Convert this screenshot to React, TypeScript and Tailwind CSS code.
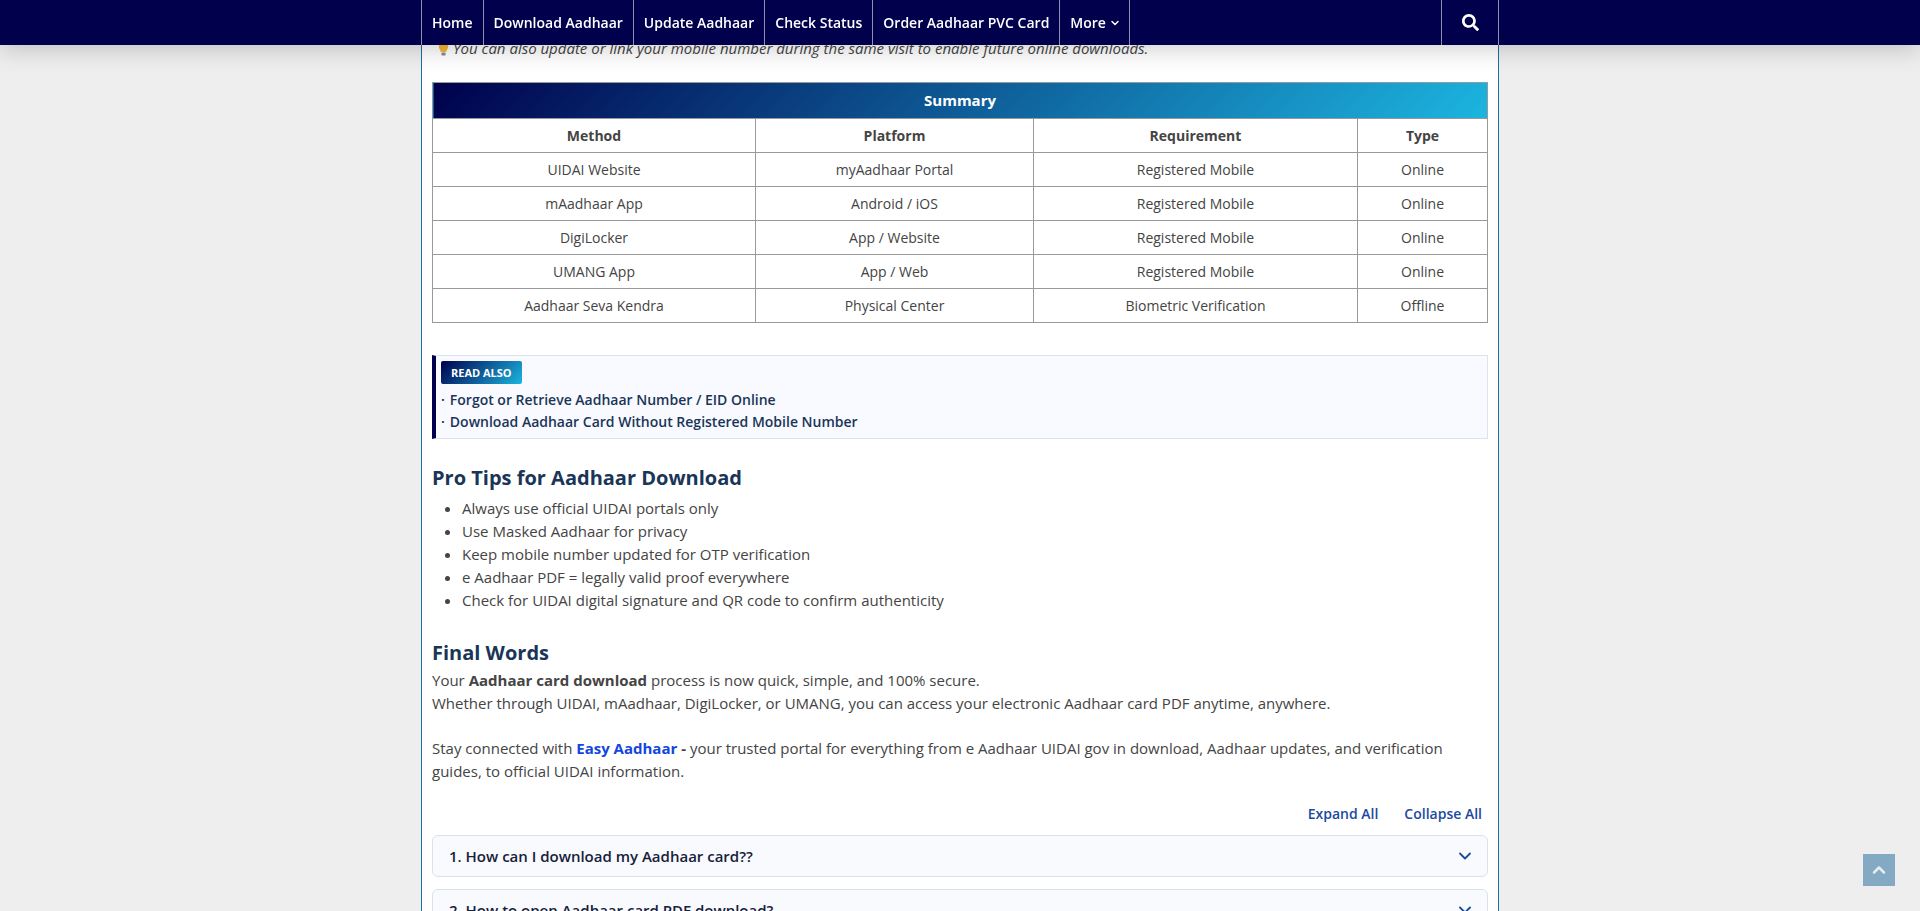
import React from 'react';
import { ChevronDown, ChevronUp } from 'lucide-react';
import { FaSearch } from 'react-icons/fa';

const navLinks = ['Home', 'Download Aadhaar', 'Update Aadhaar', 'Check Status', 'Order Aadhaar PVC Card'];

const summaryRows = [
  ['UIDAI Website', 'myAadhaar Portal', 'Registered Mobile', 'Online'],
  ['mAadhaar App', 'Android / iOS', 'Registered Mobile', 'Online'],
  ['DigiLocker', 'App / Website', 'Registered Mobile', 'Online'],
  ['UMANG App', 'App / Web', 'Registered Mobile', 'Online'],
  ['Aadhaar Seva Kendra', 'Physical Center', 'Biometric Verification', 'Offline'],
];

const proTips = [
  'Always use official UIDAI portals only',
  'Use Masked Aadhaar for privacy',
  'Keep mobile number updated for OTP verification',
  'e Aadhaar PDF = legally valid proof everywhere',
  'Check for UIDAI digital signature and QR code to confirm authenticity',
];

const faqs = ['1. How can I download my Aadhaar card??', '2. How to open Aadhaar card PDF download?'];

const cellClass = 'border border-[#999] text-center text-[14px] px-2 h-[34px]';

const App: React.FC = () => {
  return (
    <div className="h-[911px] overflow-hidden bg-[#eeeeee] font-['Open_Sans',sans-serif] text-[15px] leading-[23px] text-[#444444]">
      <nav className="fixed top-0 left-0 right-0 z-10 h-[45px] bg-[#00004c] shadow-[0_4px_25px_rgba(0,0,0,0.2)]">
        <div className="mx-auto flex h-full w-[1078px] border-x border-[#8f8fa8] text-[14px] font-semibold text-white">
          {navLinks.map((link) => (
            <a key={link} className="flex items-center border-r border-[#8f8fa8] px-[10px]">
              {link}
            </a>
          ))}
          <a className="flex items-center gap-[3px] border-r border-[#8f8fa8] pl-[10px] pr-[8px]">
            More
            <ChevronDown className="h-3 w-3" strokeWidth={3} />
          </a>
          <button className="ml-auto flex w-[57px] items-center justify-center border-l border-[#8f8fa8] pl-[1px]">
            <FaSearch className="h-[17px] w-[17px]" />
          </button>
        </div>
      </nav>

      <main className="mx-auto h-[911px] w-[1078px] border-x border-[#1a6ea3] bg-white px-[10px] pt-[37px]">
        <p className="italic">
          <svg className="ml-[6px] mr-[4px] inline-block h-[14px] w-[11px] align-[-2px]" viewBox="0 0 11 14">
            <path d="M5.5 0.5C2.6 0.5 0.8 2.5 0.8 4.8c0 2 1.6 3 2 5.2h5.4c.4-2.2 2-3.2 2-5.2C10.2 2.5 8.4.5 5.5.5z" fill="#f7b733" />
            <rect x="3.4" y="10.4" width="4.2" height="3" rx="1" fill="#8a8a96" />
          </svg>
          You can also update or link your mobile number during the same visit to enable future online downloads.
        </p>

        <table className="mt-[22px] w-[1055px] table-fixed border-collapse">
          <colgroup>
            <col className="w-[323px]" />
            <col className="w-[278px]" />
            <col className="w-[324px]" />
            <col className="w-[130px]" />
          </colgroup>
          <thead>
            <tr>
              <th colSpan={4} className="h-[36px] border border-[#999] bg-linear-135/srgb from-[#00004c] to-[#1cb5e0] text-center font-bold text-white">
                Summary
              </th>
            </tr>
            <tr>
              {['Method', 'Platform', 'Requirement', 'Type'].map((h) => (
                <th key={h} className={`${cellClass} font-bold`}>{h}</th>
              ))}
            </tr>
          </thead>
          <tbody>
            {summaryRows.map((row) => (
              <tr key={row[0]}>
                {row.map((cell) => (
                  <td key={cell} className={`${cellClass} font-normal`}>{cell}</td>
                ))}
              </tr>
            ))}
          </tbody>
        </table>

        <aside className="mt-[32px] h-[84px] border border-l-4 border-[#dbe4f0] border-l-[#00004c] bg-[#f8faff] pl-[5px] pt-[5px]">
          <span className="block w-fit rounded-[2px] bg-linear-135/srgb from-[#00004c] to-[#1cb5e0] px-[10px] text-[11px] font-bold leading-[23px] text-white">
            READ ALSO
          </span>
          <a className="mt-[5px] block text-[14px] font-semibold leading-[22px] text-[#1a3557]"><span className="mr-[5px]">·</span>Forgot or Retrieve Aadhaar Number / EID Online</a>
          <a className="block text-[14px] font-semibold leading-[22px] text-[#1a3557]"><span className="mr-[5px]">·</span>Download Aadhaar Card Without Registered Mobile Number</a>
        </aside>

        <h3 className="mt-[25px] text-[20px] font-bold leading-[28px] text-[#1a3557]">Pro Tips for Aadhaar Download</h3>
        <ul className="mt-[5px] list-disc pl-[30px]">
          {proTips.map((tip) => (
            <li key={tip}>{tip}</li>
          ))}
        </ul>

        <h3 className="mt-[27px] text-[20px] font-bold leading-[28px] text-[#1a3557]">Final Words</h3>
        <p className="mt-[2px]">
          Your <strong>Aadhaar card download</strong> process is now quick, simple, and 100% secure.
          <br />
          Whether through UIDAI, mAadhaar, DigiLocker, or UMANG, you can access your electronic Aadhaar card PDF anytime, anywhere.
        </p>
        <p className="mt-[22px]">
          Stay connected with <a className="font-bold text-[#1246e0]">Easy Aadhaar</a> <strong>-</strong> your trusted portal for everything from e Aadhaar UIDAI gov in download, Aadhaar updates, and verification guides, to official UIDAI information.
        </p>

        <div className="mt-[19px] flex justify-end gap-[26px] pr-[6px] text-[14px] font-semibold text-[#1b4aa0]">
          <a>Expand All</a>
          <a>Collapse All</a>
        </div>

        <div className="mt-[10px] flex flex-col gap-[12px]">
          {faqs.map((faq) => (
            <div key={faq} className="flex h-[42px] shrink-0 items-center justify-between rounded-[6px] border border-[#dbe1ec] bg-[#f9fafe] pl-[16px] pr-[12px] font-semibold text-[#16213a]">
              {faq}
              <ChevronDown className="h-[20px] w-[20px] text-[#1b4aa0]" strokeWidth={2.2} />
            </div>
          ))}
        </div>
      </main>

      <button className="fixed bottom-[25px] right-[25px] flex h-[32px] w-[32px] items-center justify-center bg-[#84a9c3] text-[#e6edf2]">
        <ChevronUp className="h-5 w-5" strokeWidth={3} />
      </button>
    </div>
  );
};

export default App;
